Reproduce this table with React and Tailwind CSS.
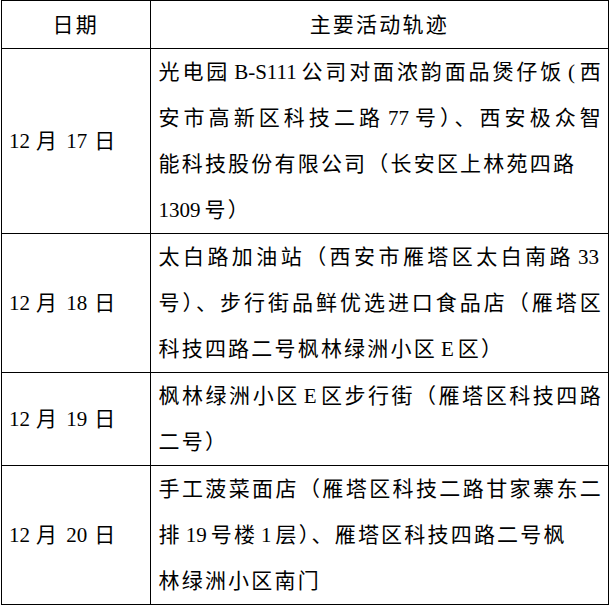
import React from "react";

const J = "[text-align-last:justify] text-justify";

function Rich({ text, m = "mx-[4px]", mStart = "mr-[4px]" }) {
  const parts = text.split(/([A-Za-z0-9\-()]+)/);
  return parts.map((p, i) =>
    i % 2 === 1 ? (
      <span
        key={i}
        className={"tracking-normal " + (i === 1 && parts[0] === "" ? mStart : m)}
      >
        {p}
      </span>
    ) : (
      <React.Fragment key={i}>{p}</React.Fragment>
    )
  );
}

function Line({ text, j }) {
  return (
    <div className={"whitespace-nowrap " + (j ? J : "")}>
      <Rich text={text} />
    </div>
  );
}

const rows = [
  {
    date: "12月17日",
    lines: [
      ["光电园B-S111公司对面浓韵面品煲仔饭(西", true],
      ["安市高新区科技二路77号）、西安极众智", true],
      ["能科技股份有限公司（长安区上林苑四路", false],
      ["1309号）", false],
    ],
  },
  {
    date: "12月18日",
    lines: [
      ["太白路加油站（西安市雁塔区太白南路33", true],
      ["号）、步行街品鲜优选进口食品店（雁塔区", true],
      ["科技四路二号枫林绿洲小区E区）", false],
    ],
  },
  {
    date: "12月19日",
    lines: [
      ["枫林绿洲小区E区步行街（雁塔区科技四路", true],
      ["二号）", false],
    ],
  },
  {
    date: "12月20日",
    lines: [
      ["手工菠菜面店（雁塔区科技二路甘家寨东二", true],
      ["排19号楼1层）、雁塔区科技四路二号枫", false],
      ["林绿洲小区南门", false],
    ],
  },
];

export default function App() {
  return (
    <div
      className="w-[610px] h-[606px] bg-white text-black"
      style={{ fontFamily: '"Liberation Serif", "Noto Sans CJK SC", serif' }}
    >
      <div className="ml-px w-[608px] border-[1.5px] border-black text-[21px] tracking-[2.2px] leading-[46px]">
        <div className="flex h-[48px] border-b-[1.5px] border-black">
          <div className="w-[148.5px] shrink-0 border-r-[1.5px] border-black flex items-center justify-center">
            日期
          </div>
          <div className="flex-1 flex items-center justify-center">主要活动轨迹</div>
        </div>
        {rows.map((r, i) => (
          <div
            key={i}
            className={"flex " + (i < rows.length - 1 ? "border-b-[1.5px] border-black" : "")}
          >
            <div className="w-[148.5px] shrink-0 border-r-[1.5px] border-black flex items-center pl-[7px] whitespace-nowrap">
              <span>
                <Rich text={r.date} m="mx-[7px]" mStart="mr-[6px]" />
              </span>
            </div>
            <div className="flex-1 min-w-0 pl-[8px] pr-[5px]">
              {r.lines.map(([t, j], k) => (
                <Line key={k} text={t} j={j} />
              ))}
            </div>
          </div>
        ))}
      </div>
    </div>
  );
}
